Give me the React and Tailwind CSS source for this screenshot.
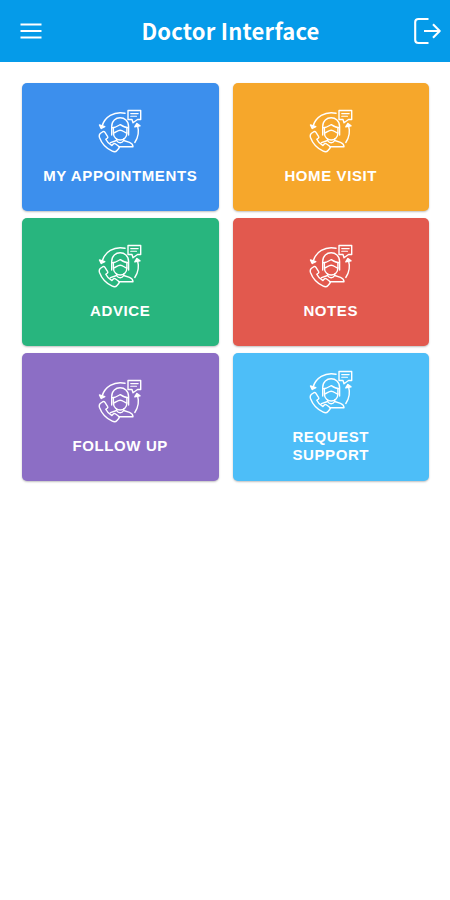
const items = [
  { label: "MY APPOINTMENTS", color: "bg-[#3c8fed]" },
  { label: "HOME VISIT", color: "bg-[#f6a72b]" },
  { label: "ADVICE", color: "bg-[#28b57e]" },
  { label: "NOTES", color: "bg-[#e2594e]" },
  { label: "FOLLOW UP", color: "bg-[#8c6ec5]" },
  { label: "REQUEST SUPPORT", color: "bg-[#4dbef8]" },
];

const SupportIcon = () => (
  <svg
    viewBox="0 0 44 44"
    className="h-11 w-11 shrink-0"
    fill="none"
    stroke="currentColor"
    strokeWidth="1.4"
    strokeLinecap="round"
    strokeLinejoin="round"
  >
    {/* arrows */}
    <path d="M27 4.300C16 2 6.500 8 4 17.500" />
    <path d="M1.500 16 3.200 19.500 6.800 17.600Z" fill="currentColor" />
    <path d="M36.800 33.500C40.500 28 41.200 22.500 39.600 17" />
    <path d="M36.800 17.800 38.900 14.500 42 16.800Z" fill="currentColor" />
    {/* message */}
    <path d="M30 1.500H42.700V10.500H39.500L35 13.800 34 10.500H30Z" />
    <path d="M32.700 4.600H40.200M32.700 7.300H38.500" strokeWidth="1.1" />
    {/* head */}
    <path d="M13.700 26V17.500C13.700 5.800 30.600 5.800 30.600 17.500V26" />
    <path d="M14 18.700C17.500 18.700 19.300 17.400 22.200 15.600C25 17.400 27 18.700 30.400 18.700" />
    <path d="M15.400 19V24C15.400 28.500 19 31 22.200 31C25.500 31 28.900 28.500 28.900 24V19" />
    <path d="M15.600 24C18 23.500 19.500 21.300 22.200 21.300C24.900 21.300 26.500 23.500 28.800 24" />
    {/* shoulders */}
    <path d="M18.600 30V31.500L12.500 33.700M25.700 30V31.500L31.500 33.300C34 34.300 35 35.500 35 37.700H20.500" />
    <path d="M18.600 31.500C20.500 34.500 23.800 34.500 25.700 31.500" />
    {/* phone */}
    <path d="M2.500 24.300 4.800 22.700C5.500 22.300 6.300 22.500 6.800 23.200L9.500 27.300C10 28 9.800 28.700 9.200 29.200L7.800 30.300C9 33 11.200 35.200 13.900 36.500L15.300 35C15.900 34.400 16.600 34.300 17.300 34.800L20.700 37.200C21.400 37.700 21.400 38.500 20.900 39.200L19 41.500C17.800 43 16 43 14.300 42.200C8 39.300 3.700 34.500 1.500 28.500C1 26.800 1.200 25.300 2.500 24.300Z" />
  </svg>
);

const Card = ({ label, color }) => (
  <button
    className={`flex h-32 flex-col items-center justify-center rounded-[5px] px-4 pb-px text-white shadow-[0_1px_2px_rgba(0,0,0,0.25)] ${color}`}
  >
    <SupportIcon />
    <span className="mt-3.5 max-w-[157px] text-center font-['Liberation_Sans',sans-serif] text-[15px] leading-[18px] font-bold tracking-[0.6px]">
      {label}
    </span>
  </button>
);

const App = () => {
  return (
    <div className="min-h-screen bg-white">
      <header className="flex h-[62px] items-center justify-between bg-[#059be9] pr-[9px] pl-5 text-white">
        <button aria-label="Menu">
          <svg viewBox="0 0 22 16" className="h-4 w-[22px]" fill="none" stroke="currentColor" strokeWidth="2.2">
            <path d="M.5 1.500H21.500M.5 8H21.500M.5 14.500H21.500" />
          </svg>
        </button>
        <h1 className="pb-0.5 pl-1.5 font-['Noto_Sans_CJK_SC',sans-serif] text-[22px] leading-8 font-bold tracking-[0.2px]">
          Doctor Interface
        </h1>
        <button aria-label="Logout">
          <svg
            viewBox="0 0 28 28"
            className="h-7 w-7"
            fill="none"
            stroke="currentColor"
            strokeWidth="2.1"
            strokeLinejoin="round"
          >
            <path d="M15.500 2H5.500Q2.200 2 2.200 5V23Q2.200 26 5.500 26H15.500" />
            <path d="M11 14H26.500M20 7.300 26.700 14 20 20.700" />
          </svg>
        </button>
      </header>

      <main className="grid grid-cols-2 gap-x-[14px] gap-y-[7px] px-[21px] pt-[21px] pl-[22px]">
        {items.map((item) => (
          <Card key={item.label} {...item} />
        ))}
      </main>
    </div>
  );
};

export default App;
